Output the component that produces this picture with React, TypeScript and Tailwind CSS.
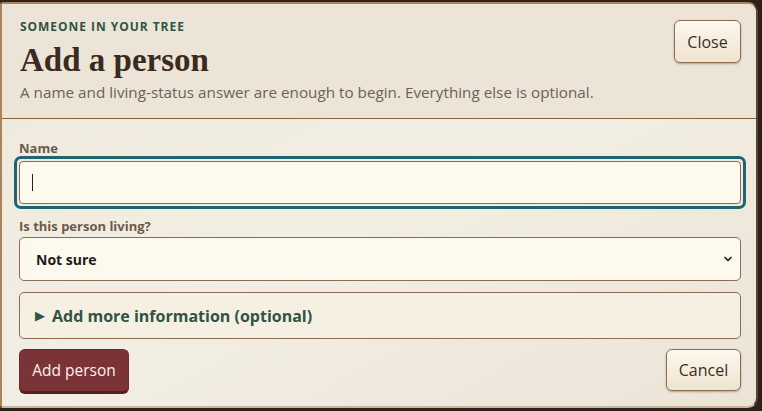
import { ChevronDown } from "lucide-react";

const sans = "font-['Open_Sans',_'Liberation_Sans',_sans-serif]";

function SoftButton({ children, className = "" }: { children: React.ReactNode; className?: string }) {
  return (
    <button
      type="button"
      className={`rounded-md border border-[#8c6d52] bg-gradient-to-b from-[#fdf8ee] to-[#efe3cf] text-[16px] text-[#3d2e25] shadow-[0_1px_2px_rgba(60,40,20,0.35)] ${className}`}
    >
      {children}
    </button>
  );
}

export default function App() {
  return (
    <div className={`h-[411px] w-[762px] overflow-hidden bg-[#2d2119] pt-[2px] ${sans}`}>
      <div className="flex h-[406px] w-[758px] flex-col overflow-hidden rounded-r-[10px] rounded-l-[3px] border-2 border-[#a8835e] border-r-[#5a4330] border-b-[#cbb497] bg-gradient-to-br from-[#eee8dc] via-[#f3eee3] to-[#ebe4d7]">
        <header className="flex items-start justify-between border-b border-[#8b5e3c] bg-[#ebe4d7] pb-[16px] pl-[18px] pr-[15px] pt-[15px]">
          <div>
            <p className="text-[12px] font-bold uppercase leading-4 tracking-[0.08em] text-[#2f5443]">
              Someone in your tree
            </p>
            <h1 className="mt-[6px] font-['Liberation_Serif',_serif] text-[33px] font-bold leading-[38px] text-[#3b2a20]">
              Add a person
            </h1>
            <p className="mt-[3px] text-[15.25px] leading-5 text-[#6e6157]">
              A name and living-status answer are enough to begin. Everything else is optional.
            </p>
          </div>
          <SoftButton className="mt-[1px] h-[43px] w-[67px]">Close</SoftButton>
        </header>

        <div className="flex flex-1 flex-col pl-[17px] pr-[15px] pt-[21px]">
          <label className="text-[13px] font-bold leading-4 text-[#6b5a4b]">Name</label>
          <div className="-mx-[5px] rounded-[7px] border-[3px] border-[#1f6571] p-[2px]">
            <div className="flex h-[43px] items-center rounded-[4px] border border-[#8d6b52] bg-[#fdf9ee] pl-[12px]">
              <span className="h-[17px] w-px bg-[#222]" />
            </div>
          </div>

          <label className="mt-[9px] text-[13px] font-bold leading-4 text-[#6b5a4b]">
            Is this person living?
          </label>
          <div className="mt-[3px] flex h-[44px] items-center justify-between rounded-[5px] border border-[#8d6b52] bg-[#fdf9ee] pl-[16px] pr-[6px]">
            <span className="text-[14px] font-bold text-[#1c1c1c]">Not sure</span>
            <ChevronDown className="h-[12px] w-[12px] stroke-[3.5] text-[#222]" />
          </div>

          <div className="mt-[11px] flex h-[47px] items-center gap-[7px] rounded-[5px] border border-[#8d6b52] bg-[#f6f0e3] pl-[15px]">
            <span className="text-[13px] leading-none text-[#2f5443]">▶</span>
            <span className="text-[16px] font-bold text-[#2f5443]">Add more information (optional)</span>
          </div>

          <div className="mt-[10px] flex items-start justify-between">
            <button
              type="button"
              className="h-[45px] w-[110px] rounded-md border border-[#6a2a2e] border-b-[3px] border-b-[#52201f] bg-[#7b3337] text-[15.5px] text-[#fbf1ea]"
            >
              Add person
            </button>
            <SoftButton className="h-[42px] w-[75px]">Cancel</SoftButton>
          </div>
        </div>
      </div>
    </div>
  );
}
